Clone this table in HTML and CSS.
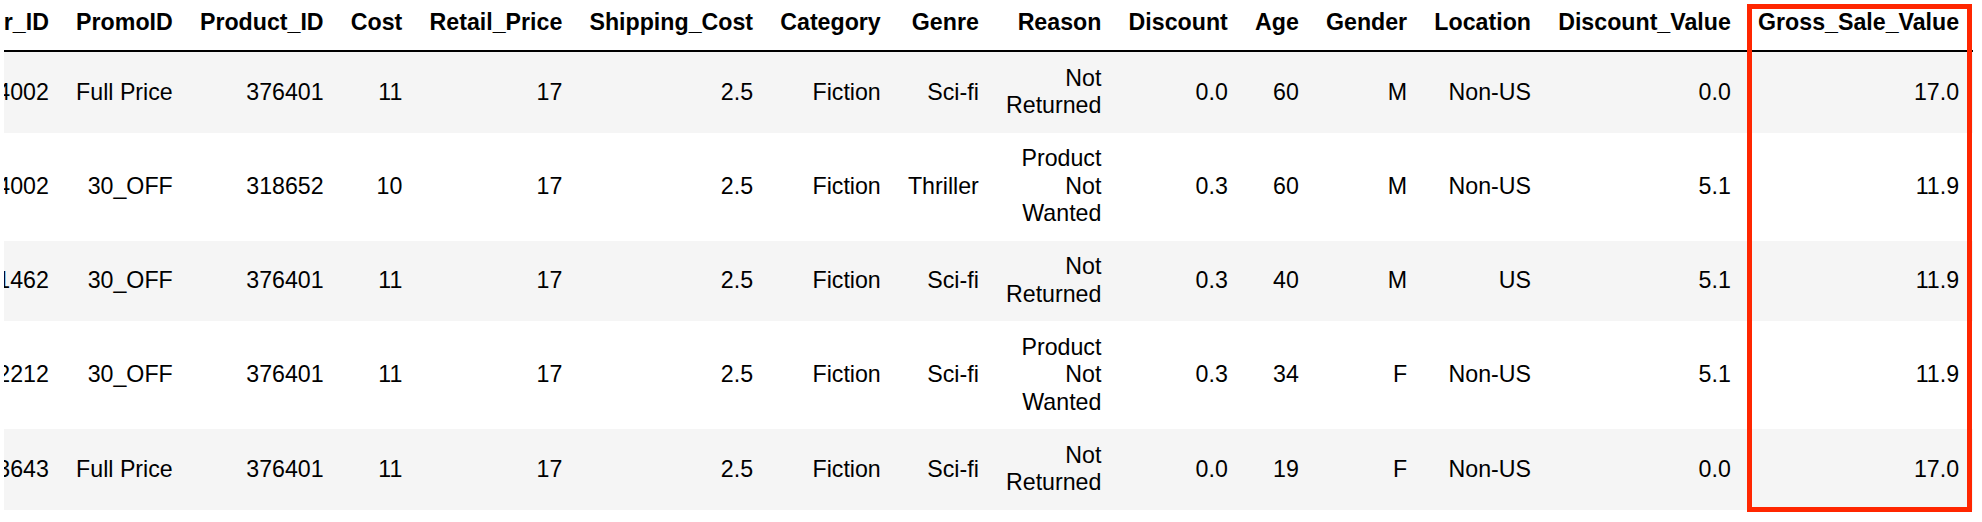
FILE: index.html
```html
<!DOCTYPE html>
<html lang="en">
<head>
<meta charset="utf-8">
<title>DataFrame</title>
<link rel="stylesheet" href="styles.css">
</head>
<body>
<div class="frame">
  <div class="scroller">
    <table class="dataframe">
      <thead>
        <tr>
          <th>Customer_ID</th>
          <th>PromoID</th>
          <th>Product_ID</th>
          <th>Cost</th>
          <th>Retail_Price</th>
          <th>Shipping_Cost</th>
          <th>Category</th>
          <th>Genre</th>
          <th>Reason</th>
          <th>Discount</th>
          <th>Age</th>
          <th>Gender</th>
          <th>Location</th>
          <th>Discount_Value</th>
          <th>Gross_Sale_Value</th>
        </tr>
      </thead>
      <tbody>
        <tr>
          <td>224002</td><td>Full Price</td><td>376401</td><td>11</td><td>17</td><td>2.5</td><td>Fiction</td><td>Sci-fi</td><td class="reason">Not Returned</td><td>0.0</td><td>60</td><td>M</td><td>Non-US</td><td>0.0</td><td>17.0</td>
        </tr>
        <tr>
          <td>224002</td><td>30_OFF</td><td>318652</td><td>10</td><td>17</td><td>2.5</td><td>Fiction</td><td>Thriller</td><td class="reason">Product Not Wanted</td><td>0.3</td><td>60</td><td>M</td><td>Non-US</td><td>5.1</td><td>11.9</td>
        </tr>
        <tr>
          <td>211462</td><td>30_OFF</td><td>376401</td><td>11</td><td>17</td><td>2.5</td><td>Fiction</td><td>Sci-fi</td><td class="reason">Not Returned</td><td>0.3</td><td>40</td><td>M</td><td>US</td><td>5.1</td><td>11.9</td>
        </tr>
        <tr>
          <td>232212</td><td>30_OFF</td><td>376401</td><td>11</td><td>17</td><td>2.5</td><td>Fiction</td><td>Sci-fi</td><td class="reason">Product Not Wanted</td><td>0.3</td><td>34</td><td>F</td><td>Non-US</td><td>5.1</td><td>11.9</td>
        </tr>
        <tr>
          <td>233643</td><td>Full Price</td><td>376401</td><td>11</td><td>17</td><td>2.5</td><td>Fiction</td><td>Sci-fi</td><td class="reason">Not Returned</td><td>0.0</td><td>19</td><td>F</td><td>Non-US</td><td>0.0</td><td>17.0</td>
        </tr>
      </tbody>
    </table>
  </div>
  <div class="highlight"></div>
</div>
</body>
</html>
```

FILE: styles.css
```css
html, body {
  margin: 0;
  padding: 0;
  background: #ffffff;
}

body {
  font-family: "Liberation Sans", Arial, Helvetica, sans-serif;
  color: #000000;
}

.frame {
  position: relative;
  width: 1982px;
  height: 522px;
  overflow: hidden;
}

.scroller {
  margin-left: 4px;
  overflow: hidden;
}

.dataframe {
  border-collapse: collapse;
  border-spacing: 0;
  font-size: 23.2px;
  margin-left: -113px;
}

.dataframe th,
.dataframe td {
  text-align: right;
  vertical-align: middle;
  padding: 12.75px 13.6px;
  line-height: 27.5px;
  white-space: nowrap;
}

.dataframe th {
  font-weight: bold;
  padding-top: 9px;
  padding-bottom: 13.5px;
  border-bottom: 2px solid #000000;
}

.dataframe tbody tr:nth-child(odd) {
  background: #f5f5f5;
}

.dataframe td.reason {
  white-space: normal;
  width: 1px;
}

.highlight {
  position: absolute;
  left: 1747px;
  top: 4px;
  width: 225px;
  height: 508px;
  box-sizing: border-box;
  border: 5px solid #ff2600;
}
```
